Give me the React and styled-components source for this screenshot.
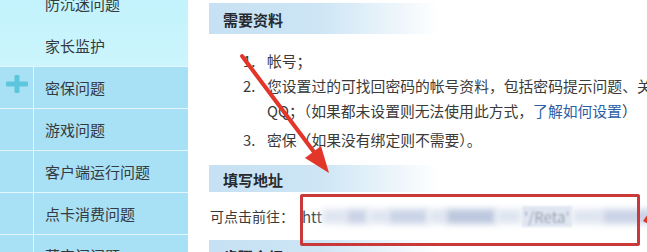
import styled, { createGlobalStyle } from 'styled-components';

const GlobalStyle = createGlobalStyle`
  html, body {
    margin: 0;
    padding: 0;
    background: #fff;
    overflow: hidden;
  }
  body {
    font-family: "Noto Sans CJK SC", "Noto Sans", sans-serif;
    color: #333;
  }
`;

// sidebar menu data
const lightItems = ['防沉迷问题', '家长监护'];
const darkItems = [
  { label: '密保问题', open: true },
  { label: '游戏问题' },
  { label: '客户端运行问题' },
  { label: '点卡消费问题' },
  { label: '藏宝阁问题' },
];

// blurred-out parts of the url
const before = [
  { w: 24, tone: 'faint' },
  { w: 22, tone: 'mid' },
  { w: 20, tone: 'faint' },
  { w: 40, tone: 'mid' },
  { w: 18, tone: 'faint' },
  { w: 50, tone: 'dark' },
  { w: 26, tone: 'faint' },
];
const after = [
  { w: 30, tone: 'faint' },
  { w: 50, tone: 'mid' },
];

function PlusIcon() {
  return (
    <svg width="22" height="18" viewBox="0 0 22 18">
      <rect x="0" y="6.5" width="22" height="5" rx="1" fill="#5cc7dc" />
      <rect x="8.5" y="0" width="5" height="18" rx="1" fill="#5cc7dc" />
    </svg>
  );
}

function Annotations() {
  return (
    <Overlay width="647" height="252" viewBox="0 0 647 252">
      <line x1="242" y1="56" x2="314" y2="152" stroke="#e2362b" strokeWidth="4" strokeLinecap="round" />
      <polygon points="329,173 305,158 321,146" fill="#e2362b" />
      <polygon points="643,221 652,208 652,226" fill="#e2362b" />
    </Overlay>
  );
}

export default function App() {
  return (
    <>
      <GlobalStyle />
      <Page>
        <Sidebar>
          <LightGroup>
            {lightItems.map((label) => (
              <NavRow key={label}>
                <IconCell />
                <NavLabel>{label}</NavLabel>
              </NavRow>
            ))}
          </LightGroup>
          <DarkGroup>
            {darkItems.map((item) => (
              <NavRow key={item.label} dark>
                <IconCell dark>{item.open && <PlusIcon />}</IconCell>
                <NavLabel>{item.label}</NavLabel>
              </NavRow>
            ))}
          </DarkGroup>
        </Sidebar>

        <Content>
          <SectionHeader h={31}>需要资料</SectionHeader>
          <List>
            <Item>
              <Num>1.</Num>
              <span>帐号；</span>
            </Item>
            <Item>
              <Num>2.</Num>
              <span>
                您设置过的可找回密码的帐号资料，包括密码提示问题、关联
                <br />
                QQ；（如果都未设置则无法使用此方式，<Link>了解如何设置</Link>）
              </span>
            </Item>
            <Item gap>
              <Num>3.</Num>
              <span>密保（如果没有绑定则不需要）。</span>
            </Item>
          </List>

          <SectionHeader h={27}>填写地址</SectionHeader>
          <AddressRow>
            <span>可点击前往：</span>
            <UrlText>
              htt
              {before.map((s, i) => (
                <Smudge key={i} w={s.w} tone={s.tone} />
              ))}
              <Peek>'/Reta'</Peek>
              {after.map((s, i) => (
                <Smudge key={i} w={s.w} tone={s.tone} />
              ))}
            </UrlText>
            <HighlightBox />
          </AddressRow>
          <SectionHeader h={30}>步骤介绍</SectionHeader>
        </Content>

        <Annotations />
      </Page>
    </>
  );
}

// page layout
const Page = styled.div`
  position: relative;
  display: flex;
  width: 647px;
  height: 252px;
  overflow: hidden;
`;

// left nav
const Sidebar = styled.div`
  width: 188px;
  flex-shrink: 0;
  margin-top: -18px;
  display: flex;
  flex-direction: column;
`;

const LightGroup = styled.div`
  background: linear-gradient(#c0f2fc, #ccf5fd);
`;

const DarkGroup = styled.div`
  background: #a8e0f5;
`;

const NavRow = styled.div`
  display: grid;
  grid-template-columns: 34px 1fr;
  height: 42px;
  box-sizing: border-box;
  border-top: ${(p) => (p.dark ? '1px solid #e4f6fd' : 'none')};
`;

const IconCell = styled.div`
  display: flex;
  align-items: center;
  justify-content: center;
  padding-bottom: 8px;
  border-right: ${(p) => (p.dark ? '1px solid #e4f6fd' : 'none')};
`;

const NavLabel = styled.div`
  display: flex;
  align-items: center;
  padding-left: 11px;
  font-size: 15px;
  color: #353a40;
  white-space: nowrap;
`;

// right content
const Content = styled.div`
  position: relative;
  flex: 1;
  padding: 3px 0 0 21px;
  white-space: nowrap;
`;

const SectionHeader = styled.div`
  display: flex;
  align-items: center;
  height: ${(p) => p.h}px;
  padding: 2px 0 0 14px;
  box-sizing: border-box;
  background: linear-gradient(to right, #c6e1f3 0, #cde5f5 110px, #e6f2fa 170px, #fff 230px);
  font-size: 15px;
  font-weight: bold;
  color: #262a30;
`;

const List = styled.div`
  padding: 14px 0 13px 34px;
  font-size: 14.8px;
  line-height: 25px;
  color: #3a3a3a;
`;

const Item = styled.div`
  display: flex;
  margin-top: ${(p) => (p.gap ? '4px' : '0')};
`;

const Num = styled.span`
  width: 24px;
  flex-shrink: 0;
`;

const Link = styled.span`
  color: #2c5ea6;
`;

const AddressRow = styled.div`
  position: relative;
  display: flex;
  align-items: center;
  gap: 8px;
  height: 48px;
  padding-left: 1px;
  font-size: 14px;
  color: #3a3a3a;
  z-index: 1;
`;

const UrlText = styled.span`
  display: flex;
  align-items: center;
  font-size: 15px;
  color: #4a5058;
`;

const Smudge = styled.span`
  display: inline-block;
  width: ${(p) => p.w}px;
  height: 15px;
  background: ${(p) => (p.tone === 'dark' ? '#bcc8df' : p.tone === 'mid' ? '#cbd4e7' : '#e0e6f1')};
  filter: blur(3px);
`;

const Peek = styled.span`
  color: #98a2b4;
  filter: blur(0.9px);
  background: #e0e6f1;
  padding: 0 2px;
`;

const HighlightBox = styled.div`
  position: absolute;
  left: 91px;
  top: 2px;
  width: 340px;
  height: 52px;
  box-sizing: border-box;
  border: 3px solid #c9393a;
  border-radius: 2px;
  pointer-events: none;
`;

const Overlay = styled.svg`
  position: absolute;
  left: 0;
  top: 0;
  pointer-events: none;
  z-index: 2;
`;
